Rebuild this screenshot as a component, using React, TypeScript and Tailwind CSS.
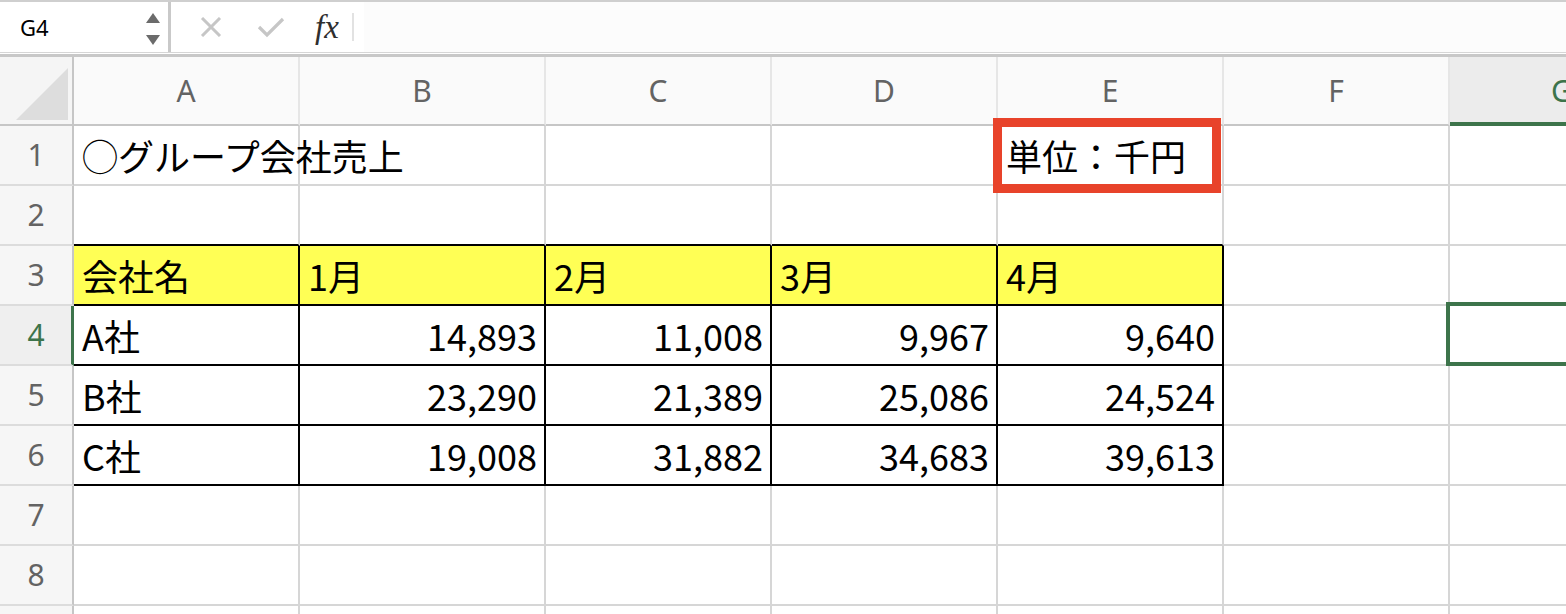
import React from "react";

const COLS = ["A", "B", "C", "D", "E", "F", "G"];

type Cell = { text?: string; align?: "l" | "r" };

const rows: Cell[][] = [
  [{ text: "◯グループ会社売上" }, {}, {}, {}, { text: "単位：千円" }, {}, {}],
  [{}, {}, {}, {}, {}, {}, {}],
  [{ text: "会社名" }, { text: "1月" }, { text: "2月" }, { text: "3月" }, { text: "4月" }, {}, {}],
  [
    { text: "A社" },
    { text: "14,893", align: "r" },
    { text: "11,008", align: "r" },
    { text: "9,967", align: "r" },
    { text: "9,640", align: "r" },
    {},
    {},
  ],
  [
    { text: "B社" },
    { text: "23,290", align: "r" },
    { text: "21,389", align: "r" },
    { text: "25,086", align: "r" },
    { text: "24,524", align: "r" },
    {},
    {},
  ],
  [
    { text: "C社" },
    { text: "19,008", align: "r" },
    { text: "31,882", align: "r" },
    { text: "34,683", align: "r" },
    { text: "39,613", align: "r" },
    {},
    {},
  ],
  [{}, {}, {}, {}, {}, {}, {}],
  [{}, {}, {}, {}, {}, {}, {}],
  [{}, {}, {}, {}, {}, {}, {}],
];

function Toolbar() {
  return (
    <div className="flex h-[53px] border-t-2 border-b border-[#cfcfcf] border-b-[#d6d6d6] bg-white">
      <div className="relative flex h-full w-[171px] shrink-0 items-center border-r-[3px] border-[#c9c9c9] pl-[20px]">
        <span className="text-[22px] leading-none text-black" style={{ fontFamily: '"Noto Sans", "Liberation Sans", sans-serif' }}>
          G4
        </span>
        <svg className="absolute left-[145px] top-[10px]" width="16" height="34" viewBox="0 0 16 34">
          <polygon points="8,1 15,11 1,11" fill="#6b6b6b" />
          <polygon points="1,23 15,23 8,33" fill="#6b6b6b" />
        </svg>
      </div>
      <div className="flex h-full items-center">
        <svg className="ml-[28px]" width="24" height="20" viewBox="0 0 24 20">
          <path d="M3 1 L21 19 M21 1 L3 19" stroke="#c6c6c6" strokeWidth="3" fill="none" />
        </svg>
        <svg className="ml-[34px]" width="28" height="22" viewBox="0 0 28 22">
          <path d="M2 11 L10 19 L26 3" stroke="#c6c6c6" strokeWidth="3.2" fill="none" />
        </svg>
        <span
          className="ml-[30px] text-[33px] italic leading-none text-[#2f2f2f]"
          style={{ fontFamily: '"Liberation Serif", "DejaVu Serif", serif' }}
        >
          fx
        </span>
        <div className="ml-[13px] h-[28px] w-[2px] bg-[#e2e2e2]" />
      </div>
      <div className="ml-[10px] h-full flex-1 bg-[#fcfcfc]" />
    </div>
  );
}

export default function App() {
  const jp = { fontFamily: '"Noto Sans CJK JP", "Noto Sans", sans-serif' };
  const hdr = { fontFamily: '"Noto Sans", "Liberation Sans", sans-serif' };

  return (
    <div className="relative h-[614px] w-[1566px] overflow-hidden bg-white">
      <Toolbar />
      <div className="h-[4px] border-t border-white bg-[#c8c8c8]" />
      <div className="grid w-[1676px] grid-cols-[74px_226px_246px_226px_226px_226px_226px_226px] grid-rows-[69px_repeat(9,60px)]">
        {/* header row */}
        <div className="relative border-r-2 border-b-2 border-[#c6c6c6] bg-[#f5f5f5]">
          <svg className="absolute left-[16px] top-[11px]" width="53" height="53" viewBox="0 0 53 53">
            <polygon points="0,52 52,52 52,0" fill="#dddddd" />
          </svg>
        </div>
        {COLS.map((c, i) => {
          const sel = c === "G";
          return (
            <div
              key={"h" + i}
              className={
                sel
                  ? "flex items-center justify-center border-r-2 border-b-4 border-r-[#e4e4e4] border-b-[#3d744b] bg-[#ececec] pt-[2px]"
                  : "flex items-center justify-center border-r-2 border-b-2 border-r-[#e6e6e6] border-b-[#c6c6c6] bg-[#fafafa]"
              }
            >
              <span
                className={sel ? "text-[30px] leading-none text-[#3d744b]" : "text-[30px] leading-none text-[#636363]"}
                style={hdr}
              >
                {c}
              </span>
            </div>
          );
        })}
        {rows.map((row, r) => {
          const rowNum = r + 1;
          const selRow = rowNum === 4;
          return (
            <React.Fragment key={"r" + r}>
              <div
                className={
                  selRow
                    ? "flex items-center justify-center border-r-[3px] border-b-2 border-r-[#3d744b] border-b-[#dcdcdc] bg-[#efefef] pl-[1px]"
                    : "flex items-center justify-center border-r-2 border-b-2 border-r-[#c6c6c6] border-b-[#dcdcdc] bg-[#f6f6f6]"
                }
              >
                {rowNum <= 8 && (
                  <span className={selRow ? "text-[30px] leading-none text-[#3d744b]" : "text-[30px] leading-none text-[#636363]"} style={hdr}>
                    {rowNum}
                  </span>
                )}
              </div>
              {row.map((cell, c) => {
                const inTable = rowNum >= 3 && rowNum <= 6 && c <= 4;
                const aboveTable = rowNum === 2 && c <= 4;
                const yellow = rowNum === 3 && c <= 4;
                const rCls = inTable ? "border-r-black" : "border-r-[#d6d6d6]";
                const bCls = inTable || aboveTable ? "border-b-black" : "border-b-[#d6d6d6]";
                const bg = yellow ? "bg-[#ffff55]" : "bg-white";
                const just = cell.align === "r" ? "justify-end pr-[7px]" : "justify-start pl-[8px]";
                const isE1 = rowNum === 1 && c === 4;
                const isG4 = rowNum === 4 && c === 6;
                const lifted = (rowNum === 1 && c === 0) || isE1 || isG4;
                return (
                  <div
                    key={"c" + r + "-" + c}
                    className={`relative flex items-center overflow-visible whitespace-nowrap border-r-2 border-b-2 ${rCls} ${bCls} ${bg} ${just} ${
                      lifted ? "z-10" : ""
                    }`}
                  >
                    {cell.text && (
                      <span className="text-[36px] leading-none text-black" style={jp}>
                        {cell.text}
                      </span>
                    )}
                    {isE1 && (
                      <div className="pointer-events-none absolute left-[-5px] top-[-8px] h-[75px] w-[228px] border-[9px] border-[#e8432a]" />
                    )}
                    {isG4 && (
                      <div className="pointer-events-none absolute left-[-4px] top-[-4px] h-[64px] w-[232px] border-4 border-[#3d744b]" />
                    )}
                  </div>
                );
              })}
            </React.Fragment>
          );
        })}
      </div>
    </div>
  );
}
